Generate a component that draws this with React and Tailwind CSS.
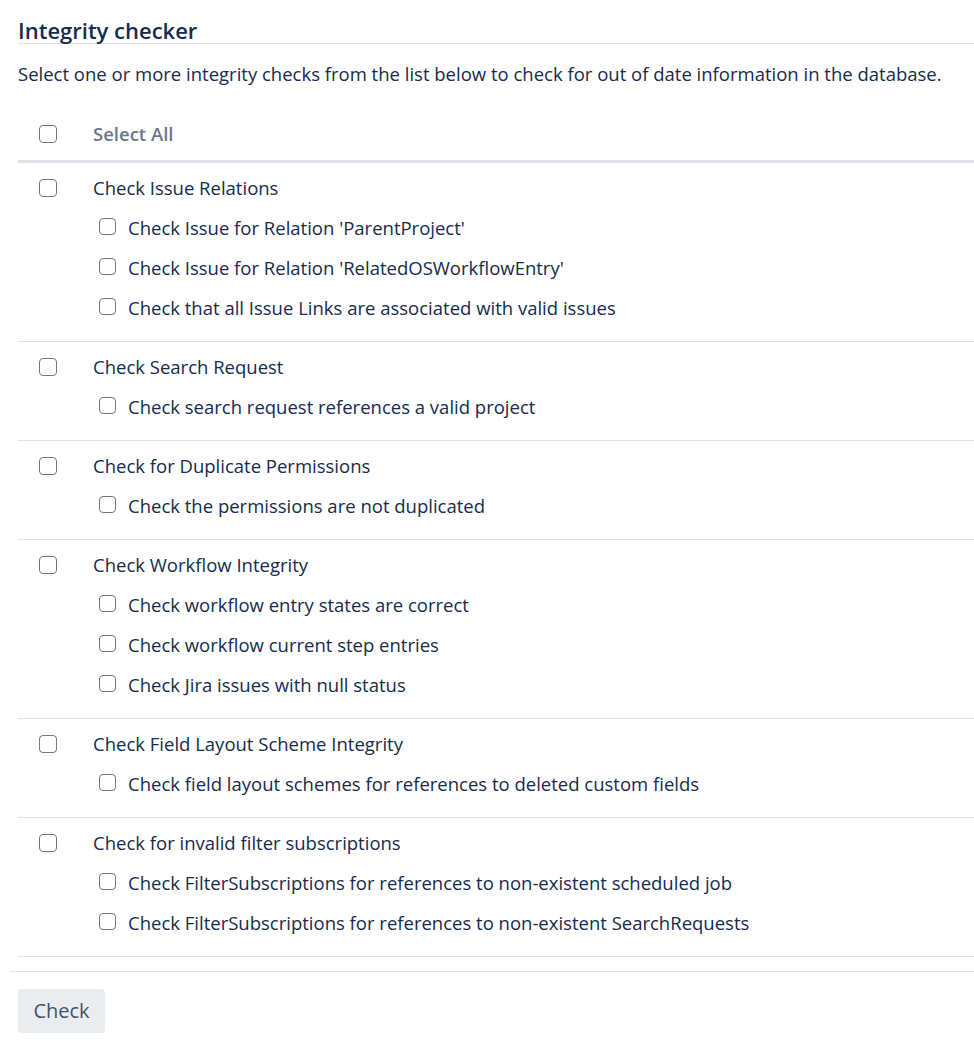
import React from "react";

const groups = [
  {
    title: "Check Issue Relations",
    items: [
      "Check Issue for Relation 'ParentProject'",
      "Check Issue for Relation 'RelatedOSWorkflowEntry'",
      "Check that all Issue Links are associated with valid issues",
    ],
  },
  { title: "Check Search Request", items: ["Check search request references a valid project"] },
  { title: "Check for Duplicate Permissions", items: ["Check the permissions are not duplicated"] },
  {
    title: "Check Workflow Integrity",
    items: [
      "Check workflow entry states are correct",
      "Check workflow current step entries",
      "Check Jira issues with null status",
    ],
  },
  {
    title: "Check Field Layout Scheme Integrity",
    items: ["Check field layout schemes for references to deleted custom fields"],
  },
  {
    title: "Check for invalid filter subscriptions",
    items: [
      "Check FilterSubscriptions for references to non-existent scheduled job",
      "Check FilterSubscriptions for references to non-existent SearchRequests",
    ],
  },
];

function Box() {
  return (
    <span className="w-[18px] h-[18px] inline-block shrink-0 rounded-[4px] border-[1.5px] border-[#767676] bg-white" />
  );
}

function SmallBox() {
  return <span className="w-[17px] h-[17px] inline-block shrink-0 rounded-[4px] border-[1.5px] border-[#767676] bg-white" />;
}

export default function App() {
  return (
    <div className="bg-white text-[#172b4d] text-[18.5px] min-h-screen" style={{ fontFamily: '"Open Sans", "Noto Sans", sans-serif' }}>
      <div className="pl-[18px]">
        <h2 className="pt-[17px] pb-[0px] text-[22px] font-semibold leading-[26px] border-b border-[#dfe1e6]">
          Integrity checker
        </h2>
        <p className="mt-[17px] leading-[26px]">
          Select one or more integrity checks from the list below to check for out of date information in the database.
        </p>
        <div className="mt-[22px]">
          <div className="flex items-center h-[54px] pb-[2px] border-b-[3px] border-[#dfe1e6]">
            <div className="w-[75px] pl-[21px] flex items-center">
              <Box />
            </div>
            <span className="font-semibold text-[#6b778c]">Select All</span>
          </div>
          {groups.map((g, i) => (
            <div key={i} className="pt-[5px] pb-[13px] border-b border-[#dfe1e6]">
              <div className="flex items-center h-[40px]">
                <div className="w-[75px] pl-[21px] flex items-center">
                  <Box />
                </div>
                <span>{g.title}</span>
              </div>
              {g.items.map((it, j) => (
                <div key={j} className="flex items-center h-[40px] pl-[81px]">
                  <span className="-mt-[4px] flex">
                    <SmallBox />
                  </span>
                  <span className="ml-[12px]">{it}</span>
                </div>
              ))}
            </div>
          ))}
        </div>
      </div>
      <div className="ml-[10px] mt-[14px] border-t border-[#dfe1e6]" />
      <div className="pl-[18px] pt-[17px]">
        <button className="h-[44px] w-[87px] rounded-[4px] bg-[#ebecf0] text-[#42526e] text-[20px]">Check</button>
      </div>
    </div>
  );
}
